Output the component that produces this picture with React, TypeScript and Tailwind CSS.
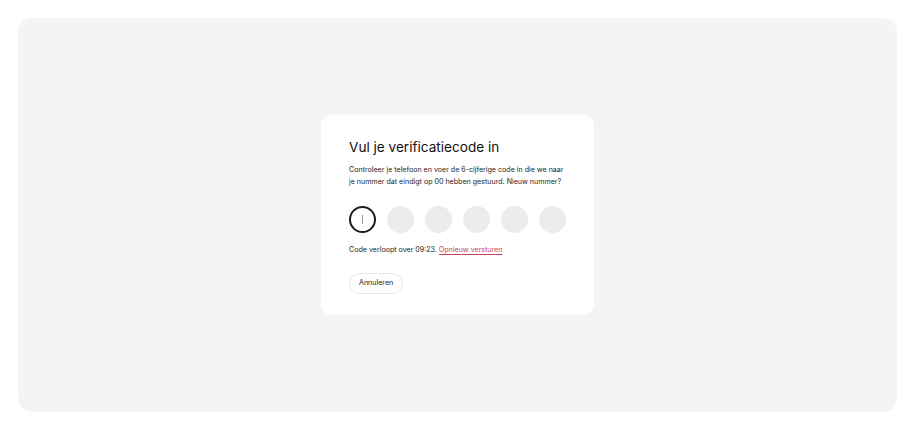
import React from "react";

export default function App() {
  return (
    <div className="w-[915px] h-[431px] bg-white p-[18px] pb-[19px]" style={{ fontFamily: "Inter, 'Noto Sans', sans-serif" }}>
      <div className="w-full h-full rounded-[14px] bg-[#f4f4f4] flex items-center justify-center">
        <div className="w-[273px] h-[200px] bg-white rounded-[10px] px-[28px] pt-[22px] flex flex-col items-start">
          <h1 className="text-[13.6px] leading-[20px] text-[#111111] font-normal">Vul je verificatiecode in</h1>
          <p className="mt-[7px] text-[7.1px] leading-[12px] text-[#1e1e1e]">
            Controleer je telefoon en voer de 6-cijferige code in die we naar je nummer dat eindigt op 00 hebben gestuurd. Nieuw nummer?
          </p>
          <div className="mt-[18px] flex gap-[11px]">
            <div className="w-[27px] h-[27px] rounded-full border-2 border-[#1c1c1c] bg-white flex items-center justify-center">
              <div className="w-px h-[9px] bg-[#9a9a9a]" />
            </div>
            <div className="w-[27px] h-[27px] rounded-full bg-[#ececec]" />
            <div className="w-[27px] h-[27px] rounded-full bg-[#ececec]" />
            <div className="w-[27px] h-[27px] rounded-full bg-[#ececec]" />
            <div className="w-[27px] h-[27px] rounded-full bg-[#ececec]" />
            <div className="w-[27px] h-[27px] rounded-full bg-[#ececec]" />
          </div>
          <p className="mt-[11px] text-[7.1px] leading-[12px] text-[#1e1e1e]">
            Code verloopt over 09:23.{" "}
            <span className="text-[#c4455a] underline underline-offset-[1.5px] decoration-[0.5px]">Opnieuw versturen</span>
          </p>
          <button className="mt-[17px] h-[21px] px-[9px] rounded-full border border-[#e6e6e6] bg-white text-[7.1px] text-[#1a1a1a] font-normal">
            Annuleren
          </button>
        </div>
      </div>
    </div>
  );
}
